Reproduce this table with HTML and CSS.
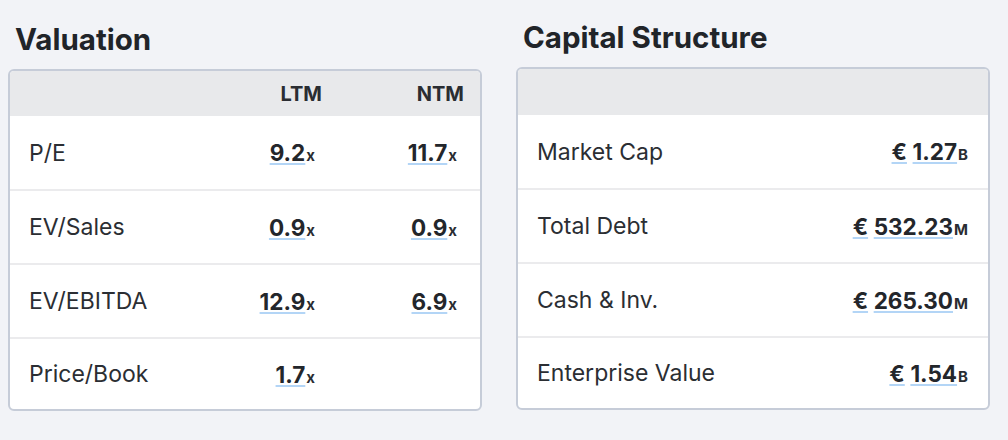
FILE: index.html
```html
<!DOCTYPE html>
<html lang="en">
<head>
<meta charset="utf-8">
<title>Valuation &amp; Capital Structure</title>
<link rel="stylesheet" href="styles.css">
</head>
<body>
<main class="page">
  <section class="panel panel--lower">
    <h2 class="panel-title">Valuation</h2>
    <div class="card">
      <div class="row row--head grid3">
        <span></span>
        <span class="col-h">LTM</span>
        <span class="col-h">NTM</span>
      </div>
      <div class="row grid3">
        <span class="label">P/E</span>
        <span class="val"><span class="num">9.2</span><span class="suf">x</span></span>
        <span class="val"><span class="num">11.7</span><span class="suf">x</span></span>
      </div>
      <div class="row grid3">
        <span class="label">EV/Sales</span>
        <span class="val"><span class="num">0.9</span><span class="suf">x</span></span>
        <span class="val"><span class="num">0.9</span><span class="suf">x</span></span>
      </div>
      <div class="row grid3">
        <span class="label">EV/EBITDA</span>
        <span class="val"><span class="num">12.9</span><span class="suf">x</span></span>
        <span class="val"><span class="num">6.9</span><span class="suf">x</span></span>
      </div>
      <div class="row grid3">
        <span class="label">Price/Book</span>
        <span class="val"><span class="num">1.7</span><span class="suf">x</span></span>
        <span class="val"></span>
      </div>
    </div>
  </section>

  <section class="panel">
    <h2 class="panel-title">Capital Structure</h2>
    <div class="card">
      <div class="row row--head row--head-tall grid2"></div>
      <div class="row grid2">
        <span class="label">Market Cap</span>
        <span class="amt"><span class="num">€</span> <span class="num">1.27</span><span class="suf">B</span></span>
      </div>
      <div class="row grid2">
        <span class="label">Total Debt</span>
        <span class="amt"><span class="num">€</span> <span class="num">532.23</span><span class="suf">M</span></span>
      </div>
      <div class="row grid2">
        <span class="label">Cash &amp; Inv.</span>
        <span class="amt"><span class="num">€</span> <span class="num">265.30</span><span class="suf">M</span></span>
      </div>
      <div class="row grid2">
        <span class="label">Enterprise Value</span>
        <span class="amt"><span class="num">€</span> <span class="num">1.54</span><span class="suf">B</span></span>
      </div>
    </div>
  </section>
</main>
</body>
</html>
```

FILE: styles.css
```css
* { box-sizing: border-box; }

html, body {
  margin: 0;
  padding: 0;
  background: #f2f3f7;
}

body {
  font-family: Inter, "Noto Sans", "Liberation Sans", sans-serif;
  color: #23262b;
  width: 1008px;
  height: 440px;
  overflow: hidden;
}

.page {
  display: grid;
  grid-template-columns: 474px 474px;
  column-gap: 34px;
  padding: 21px 18px 0 8px;
  align-items: start;
}

.panel {
  display: flex;
  flex-direction: column;
  gap: 13px;
}

.panel--lower {
  padding-top: 2px;
}

.panel-title {
  margin: 0;
  padding-left: 7px;
  font-size: 29.5px;
  font-weight: 700;
  line-height: 33px;
  color: #212429;
}

.card {
  background: #ffffff;
  border: 2px solid #c6ccd8;
  border-radius: 6px;
  overflow: hidden;
}

.row {
  height: 74px;
  align-items: center;
  padding: 0 16px 0 19px;
}

.row + .row {
  border-top: 2px solid #ebebed;
}

.row:last-child {
  height: 72px;
}

.row--head {
  height: 45px;
  background: #e8e9eb;
}

.row--head-tall {
  height: 46px;
}

.row--head + .row {
  border-top: 0;
  height: 73px;
}

.grid3 {
  display: grid;
  grid-template-columns: 1fr 142px 142px;
}

.grid2 {
  display: grid;
  grid-template-columns: 1fr auto;
  padding: 0 20px 0 19px;
}

.col-h {
  text-align: right;
  font-size: 20px;
  font-weight: 700;
  color: #2a2d32;
  padding-top: 1px;
}

.label {
  font-size: 23px;
  font-weight: 400;
  color: #2b2e33;
}

.val {
  text-align: right;
  padding-right: 7px;
  white-space: nowrap;
}

.amt {
  text-align: right;
  white-space: nowrap;
  font-size: 20px;
}

.num {
  font-size: 22.5px;
  font-weight: 700;
  color: #23262b;
  text-decoration: underline;
  text-decoration-color: #b3d5f6;
  text-decoration-thickness: 2px;
  text-underline-offset: 2px;
}

.suf {
  font-size: 15px;
  font-weight: 700;
  color: #2a2d32;
  margin-left: 1px;
}
```
